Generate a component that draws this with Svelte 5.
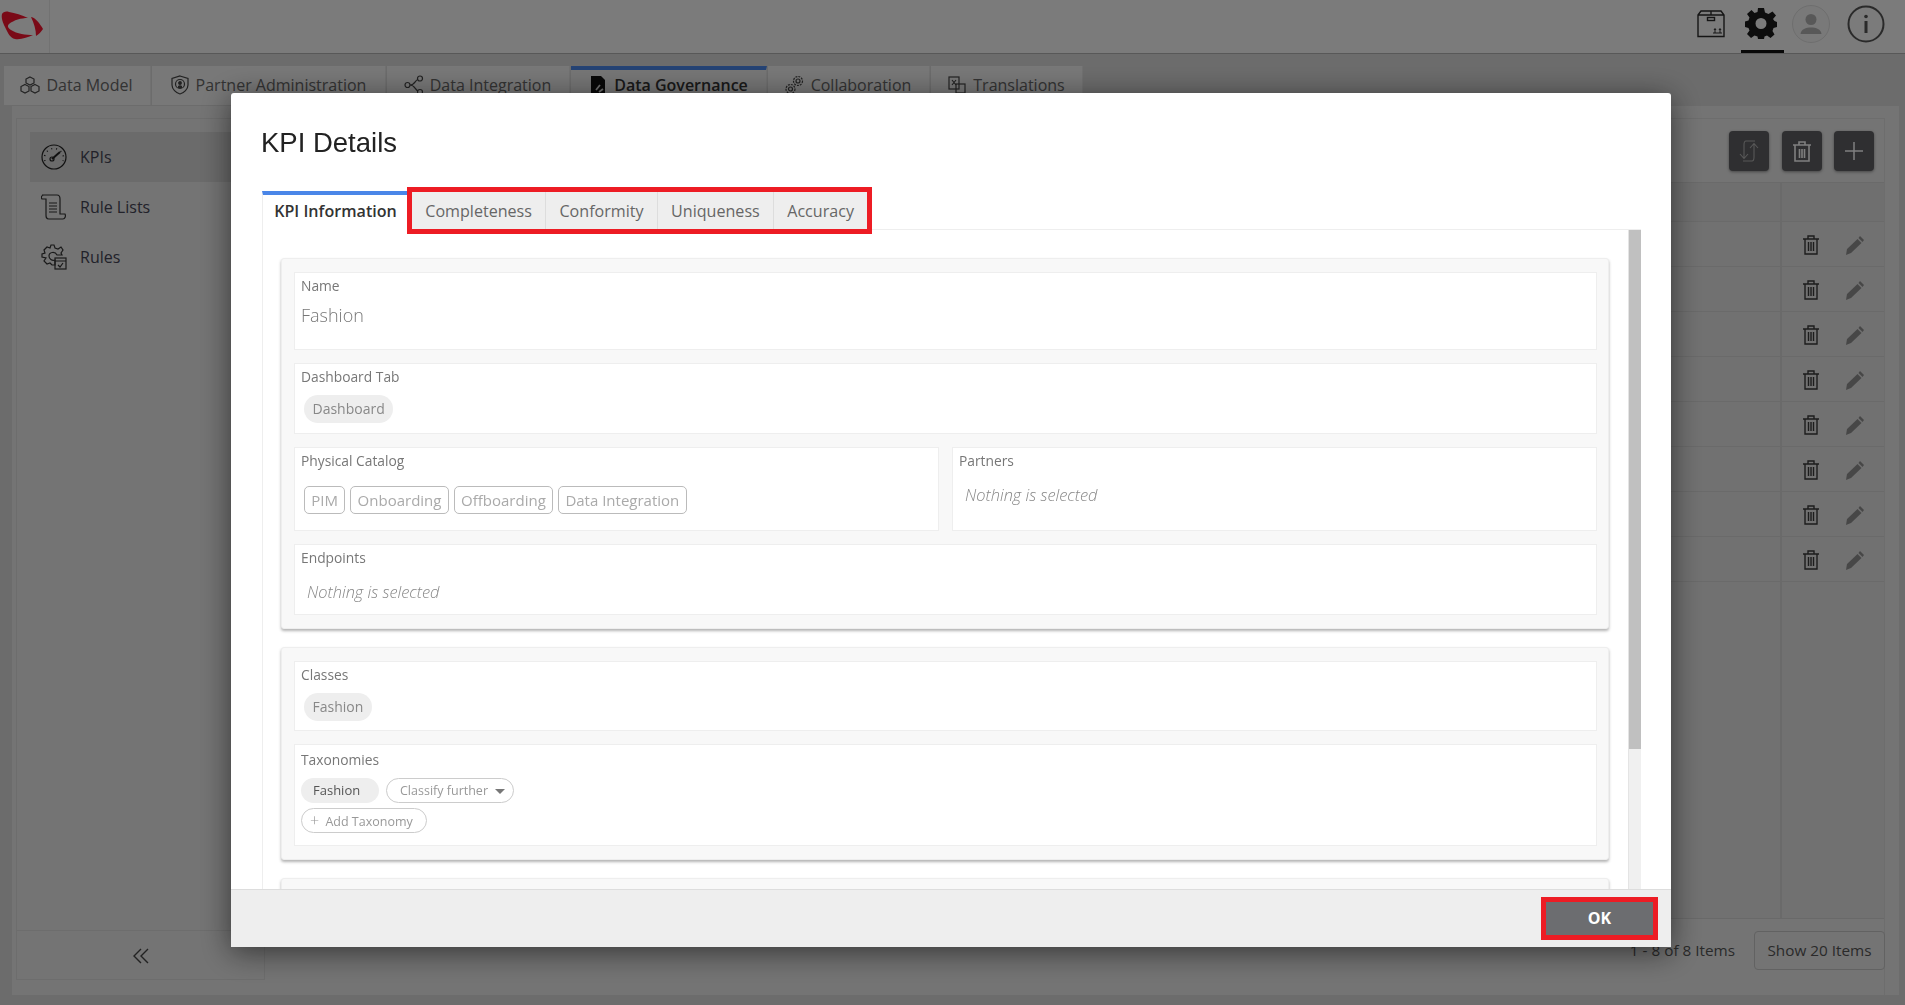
<script>
  const tabs = [
    { label: 'Data Model', w: 147, icon: 'cubes' },
    { label: 'Partner Administration', w: 234, icon: 'shield' },
    { label: 'Data Integration', w: 183, icon: 'nodes' },
    { label: 'Data Governance', w: 196, icon: 'doc', active: true },
    { label: 'Collaboration', w: 162, icon: 'gears' },
    { label: 'Translations', w: 152, icon: 'trans' }
  ];
  const rows = Array.from({ length: 8 });
  const detailTabs = ['Completeness', 'Conformity', 'Uniqueness', 'Accuracy'];
  const catalogs = ['PIM', 'Onboarding', 'Offboarding', 'Data Integration'];
</script>

<div class="page">
  <header class="topbar">
    <div class="logo">
      <svg width="44" height="32" viewBox="0 0 44 32">
        <g transform="translate(-1,-10)" fill="#f5142e">
          <path d="M2 14 C3 12 6 11 9 12 C15 13 22 15 28 18 C21 18 14 20 9 24 C7 26 8 28 11 30 C17 34 26 35 33 35 C28 37 21 40 15 39 C10 38 8 33 5 27 C3 23 1 18 2 14Z" />
          <path d="M31 17 C36 18 40 24 43 29 C41 32 39 34 36 36 C36 30 34 23 31 17Z" />
        </g>
      </svg>
    </div>
    <div class="spacer"></div>
    <div class="top-icons">
      <svg class="ti box" width="28" height="28" viewBox="0 0 28 28" fill="none" stroke="#2a2a2a" stroke-width="1.4">
        <path d="M1 5 L4 1 H24 L27 5 V26.500 H1Z M1 5 H27 M14 1 V5" />
        <rect x="10.500" y="7.500" width="7" height="3" />
        <path d="M16 23 H25 M18 23 V19 M23 23 V19 M17 20 L18 18.500 L19 20 M22 20 L23 18.500 L24 20" stroke-width="1" />
      </svg>
      <div class="gear-wrap">
        <svg width="32" height="32" viewBox="0 0 32 32">
          <path fill="#1a1a1a" fill-rule="evenodd" d="M13 1 H19 L20 5.500 L23.500 7 L27.500 4.500 L31 8.500 L28 12 L29.500 14 L32 15 V20 L28.500 21 L27.500 24 L29.500 27.500 L25.500 31 L22 28.500 L19.500 29.500 L19 32 H13 L12.500 29.500 L9.500 28.500 L6 31 L2 27 L4.500 23.500 L3.500 21 L0 20 V14.500 L3.500 13.500 L4.500 10.500 L2 7 L6.500 3 L9.500 6 L12.500 5 Z M16 11 A5.500 5.500 0 1 0 16 22 A5.500 5.500 0 1 0 16 11Z" />
        </svg>
      </div>
      <svg class="ti avatar" width="38" height="38" viewBox="0 0 38 38">
        <circle cx="19" cy="19" r="18.500" fill="#f2f2f2" stroke="#dcdcdc" />
        <circle cx="19" cy="14.500" r="5.500" fill="#b0b0b0" />
        <path fill="#b0b0b0" d="M8.500 29 C9 24 14 22.500 19 22.500 C24 22.500 29 24 29.500 29Z" />
      </svg>
      <svg class="ti info" width="38" height="38" viewBox="0 0 38 38">
        <circle cx="19" cy="19" r="17.500" fill="none" stroke="#555" stroke-width="2" />
        <circle cx="19" cy="11.500" r="1.800" fill="#555" />
        <rect x="17.500" y="16" width="3" height="12" fill="#555" />
      </svg>
    </div>
  </header>

  <nav class="maintabs">
    {#each tabs as t}
      <div class="maintab" class:active={t.active} style="width:{t.w}px">
        <svg width="20" height="20" viewBox="0 0 20 20" fill="none" stroke="#444" stroke-width="1.200">
          {#if t.icon === 'cubes'}
            <path d="M10 2 L14 4 V8 L10 10 L6 8 V4Z M5 9.500 L9 11.500 V16 L5 18 L1 16 V11.500Z M15 9.500 L19 11.500 V16 L15 18 L11 16 V11.500Z" />
          {:else if t.icon === 'shield'}
            <path d="M10 1 L18 3.500 V10 C18 14 14 18 10 19 C6 18 2 14 2 10 V3.500Z" />
            <circle cx="10" cy="9" r="4.500" />
            <circle cx="10" cy="8" r="1.300" fill="#444" />
            <path fill="#444" d="M8 13 H12 V11 C11 10 9 10 8 11Z" stroke="none" />
          {:else if t.icon === 'nodes'}
            <circle cx="3.500" cy="10" r="2.500" />
            <circle cx="16" cy="3.500" r="2.500" />
            <circle cx="16" cy="17" r="2.500" />
            <path d="M6 10 C11 10 11 5 14 4.500 M6 10 C11 10 11 15 14 16" />
          {:else if t.icon === 'doc'}
            <path fill="#111" stroke="none" d="M3 1 H13 L17 5 V19 H3Z" />
            <path stroke="#ddd" stroke-width="1.800" d="M8 15 L12 10 M11 17 L15 14" />
          {:else if t.icon === 'gears'}
            <circle cx="13" cy="6" r="4.500" stroke-dasharray="2 1" />
            <circle cx="13" cy="6" r="2" />
            <circle cx="5.500" cy="14" r="4.500" stroke-dasharray="2 1" />
            <circle cx="5.500" cy="14" r="2" />
          {:else}
            <rect x="2" y="2" width="10" height="12" />
            <rect x="9" y="9" width="9" height="9" />
            <path d="M5 5 L9 10 M9 5 L5 10" />
          {/if}
        </svg>
        <span>{t.label}</span>
      </div>
    {/each}
  </nav>

  <section class="panel">
    <aside class="side">
      <div class="side-list">
        <div class="side-item sel">
          <svg width="26" height="26" viewBox="0 0 26 26" fill="none" stroke="#222" stroke-width="1.200">
            <circle cx="13" cy="13" r="12" />
            <path stroke-dasharray="1 4" stroke-width="1.500" d="M4 17 A9.500 9.500 0 1 1 22 17" />
            <path stroke-width="2" d="M11 15 L19 8" />
            <circle cx="11" cy="15" r="2" />
          </svg>
          <span>KPIs</span>
        </div>
        <div class="side-item">
          <svg width="26" height="26" viewBox="0 0 26 26" fill="none" stroke="#333" stroke-width="1.200">
            <path d="M1 1 H16 C19 1 19 4 19 5 V20 H24 C25 22 24 25 22 25 H8 C5 25 5 23 5 21 V5 H1 C0 4 0 1 3 1" />
            <path d="M8 9 H16 M8 12 H16 M8 15 H16 M8 18 H16" />
          </svg>
          <span>Rule Lists</span>
        </div>
        <div class="side-item">
          <svg width="26" height="26" viewBox="0 0 26 26" fill="none" stroke="#333" stroke-width="1.200">
            <path d="M10 1 H13 L14 4 L17 5 L20 3 L22 6 L20 9 L21 11 H16 C14 7 8 8 8 12 C8 15 11 17 14 16 V21 H11 L9 19 L6 20 L3 17 L5 14 L1 13 V10 L4 9 L3 6 L6 3 L9 4Z" />
            <rect x="14" y="14" width="11" height="11" />
            <path d="M14 17 H25 M17 21 L19 23 L22 19" />
          </svg>
          <span>Rules</span>
        </div>
      </div>
      <div class="collapse">
        <svg width="16" height="16" viewBox="0 0 16 16" fill="none" stroke="#444" stroke-width="1.400">
          <path d="M8 1 L1 8 L8 15 M15 1 L8 8 L15 15" />
        </svg>
      </div>
    </aside>

    <div class="main">
      <div class="toolbar">
        <button class="dark">
          <svg width="20" height="22" viewBox="0 0 20 22" fill="none" stroke="#b0b0b0" stroke-width="1.100">
            <path d="M16 1 H7 C5 1 5 3 5 5 V18 M1 14 L5 18.500 L9 14 M4 21 H13 C15 21 15 19 15 17 V4 M11 8 L15 3.500 L19 8" />
          </svg>
        </button>
        <button class="dark">
          <svg width="20" height="23" viewBox="0 0 20 23" fill="none" stroke="#fff" stroke-width="1.600">
            <path d="M1 5 H19 M7 5 V2 H13 V5 M3 5 V21 H17 V5 M7.500 9 V18 M10 9 V18 M12.500 9 V18" />
          </svg>
        </button>
        <button class="dark">
          <svg width="20" height="20" viewBox="0 0 20 20" stroke="#fff" stroke-width="1.500"><path d="M10 1 V19 M1 10 H19" /></svg>
        </button>
      </div>
      <div class="table">
        <div class="thead"><div class="c1"></div><div class="c2"></div></div>
        {#each rows as r}
          <div class="trow">
            <div class="c1"></div>
            <div class="c2">
              <svg width="16" height="20" viewBox="0 0 16 20" fill="none" stroke="#3a3a3a" stroke-width="1.400">
                <path d="M0 4 H16 M5 4 V1 H11 V4 M2 4 V19 H14 V4 M5.500 7 V16 M8 7 V16 M10.500 7 V16" />
              </svg>
              <svg width="20" height="20" viewBox="0 0 20 20">
                <path fill="#8f8f8f" d="M15 1 L19 5 L17.500 7 L13.500 3Z M12.500 4 L16.500 8 L6 18 L1 20 L2 14Z" />
              </svg>
            </div>
          </div>
        {/each}
        <div class="tfill"><div class="c1"></div><div class="c2"></div></div>
      </div>
      <div class="pager">
        <span class="count">1 - 8 of 8 Items</span>
        <span class="show">Show 20 Items</span>
      </div>
    </div>
  </section>
</div>

<div class="overlay"></div>

<div class="modal">
  <h1>KPI Details</h1>
  <div class="dtabs">
    <div class="dtab active">KPI Information</div>
    <div class="dtab-group">
      {#each detailTabs as d}
        <div class="dtab">{d}</div>
      {/each}
    </div>
  </div>
  <div class="dbody">
    <div class="scroll">
      <div class="card">
        <div class="field name">
          <label>Name</label>
          <div class="value">Fashion</div>
        </div>
        <div class="field dash">
          <label>Dashboard Tab</label>
          <div class="chips"><span class="pill">Dashboard</span></div>
        </div>
        <div class="two">
          <div class="field cat">
            <label>Physical Catalog</label>
            <div class="chips outline">
              {#each catalogs as c}<span class="tag">{c}</span>{/each}
            </div>
          </div>
          <div class="field cat">
            <label>Partners</label>
            <div class="none partners">Nothing is selected</div>
          </div>
        </div>
        <div class="field end">
          <label>Endpoints</label>
          <div class="none">Nothing is selected</div>
        </div>
      </div>

      <div class="card">
        <div class="field classes">
          <label>Classes</label>
          <div class="chips"><span class="pill">Fashion</span></div>
        </div>
        <div class="field tax">
          <label>Taxonomies</label>
          <div class="tax-line first">
            <span class="tpill">Fashion</span>
            <span class="toutline further">Classify further <i class="caret"></i></span>
          </div>
          <div class="tax-line">
            <span class="toutline add"><b>+</b> Add Taxonomy</span>
          </div>
        </div>
      </div>

      <div class="card stub"></div>
    </div>
    <div class="scrollbar"><div class="thumb"></div></div>
  </div>
  <footer class="mfoot">
    <button class="ok">OK</button>
  </footer>
</div>

<style>
  :global(body) {
    margin: 0;
    font-family: "Open Sans", sans-serif;
    overflow: hidden;
  }
  .page {
    width: 1905px;
    height: 1005px;
    background: #d8d8d8;
    display: flex;
    flex-direction: column;
    overflow: hidden;
  }
  .topbar {
    height: 53px;
    flex: none;
    background: #f6f6f6;
    border-bottom: 1px solid #b0b0b0;
    display: flex;
    box-sizing: content-box;
  }
  .logo {
    width: 50px;
    border-right: 1px solid #e4e4e4;
    padding: 10px 0 0 1px;
    box-sizing: border-box;
    overflow: visible;
  }
  .logo svg { display: block; }
  .spacer { flex: 1; }
  .top-icons {
    display: flex;
    align-items: flex-start;
    padding-right: 20px;
  }
  .ti { display: block; }
  .box { margin-top: 10px; margin-right: 16px; }
  .gear-wrap {
    width: 43px;
    height: 53px;
    box-sizing: border-box;
    padding: 7px 0 0 4px;
    border-bottom: 3px solid #111;
    margin-right: 8px;
  }
  .gear-wrap svg { display: block; }
  .avatar { margin-top: 5px; margin-right: 17px; }
  .info { margin-top: 5px; }

  .maintabs {
    display: flex;
    height: 39px;
    margin-top: 12px;
    padding-left: 4px;
    gap: 1px;
    flex: none;
  }
  .maintab {
    background: #f0f0f0;
    box-sizing: border-box;
    display: flex;
    align-items: center;
    justify-content: center;
    gap: 6px;
    font-size: 16px;
    color: #666;
    padding: 0 1px 2px 0;
    border-right: 1px solid #e2e2e2;
  }
  .maintab svg { flex: none; }
  .maintab.active {
    background: #ececec;
    border-top: 4px solid #4a86e8;
    font-weight: 600;
    color: #333;
    padding-bottom: 6px;
  }
  .panel {
    flex: none;
    height: 889px;
    margin: 1px 6px 0 12px;
    background: #e8e8e8;
    display: flex;
    box-sizing: border-box;
    padding: 12px 14px 0 4px;
  }
  .side {
    width: 249px;
    height: 862px;
    box-sizing: border-box;
    border: 1px solid #dadada;
    display: flex;
    flex-direction: column;
    padding: 13px 0 0 13px;
  }
  .side-list { flex: 1; }
  .side-item {
    height: 50px;
    display: flex;
    align-items: center;
    gap: 13px;
    padding-left: 11px;
    font-size: 16px;
    color: #445;
  }
  .side-item.sel { background: #d6d6d6; }
  .collapse {
    height: 49px;
    margin-left: -13px;
    padding-top: 2px;
    box-sizing: border-box;
    border-top: 1px solid #dadada;
    display: flex;
    align-items: center;
    justify-content: center;
  }
  .main {
    flex: 1;
    display: flex;
    flex-direction: column;
    border: 1px solid #dadada;
    border-bottom: none;
    border-left: none;
    min-width: 0;
  }
  .toolbar {
    height: 64px;
    flex: none;
    display: flex;
    justify-content: flex-end;
    gap: 12.5px;
    padding: 12px 10px 0 0;
    box-sizing: border-box;
    border-bottom: 1px solid #d4d4d4;
  }
  .dark {
    width: 40px;
    height: 40px;
    border: none;
    background: #5e5e62;
    border-radius: 4px;
    display: flex;
    align-items: center;
    justify-content: center;
    padding: 0;
    box-shadow: 0 1px 3px rgba(0,0,0,.4);
  }
  .table {
    height: 736px;
    flex: none;
    display: flex;
    flex-direction: column;
    box-sizing: border-box;
    border-bottom: 1px solid #d2d2d2;
  }
  .thead { height: 39px; display: flex; flex: none; border-bottom: 1px solid #d4d4d4; box-sizing: border-box; background: #dedede; }
  .trow { height: 45px; display: flex; flex: none; border-bottom: 1px solid #d4d4d4; box-sizing: border-box; background: #e2e2e2; }
  .tfill { flex: 1; display: flex; background: #e2e2e2; }
  .c1 { flex: 1; border-right: 2px solid #d4d4d4; }
  .c2 {
    width: 102px;
    display: flex;
    align-items: center;
    gap: 26px;
    padding: 2px 0 0 21px;
    box-sizing: border-box;
  }
  .pager {
    display: flex;
    justify-content: flex-end;
    align-items: center;
    gap: 19px;
    height: 39px;
    margin: 12px -1px 0 0;
    font-size: 15.300px;
    color: #555;
    flex: none;
  }
  .count { margin-bottom: 2px; }
  .show {
    width: 131px;
    height: 39px;
    box-sizing: border-box;
    border: 1px solid #c4c4c4;
    border-radius: 4px;
    padding-bottom: 2px;
    display: flex;
    align-items: center;
    justify-content: center;
    white-space: nowrap;
  }

  .overlay {
    position: fixed;
    inset: 0;
    background: rgba(0,0,0,.5);
  }
  .modal {
    position: fixed;
    left: 231px;
    top: 93px;
    width: 1440px;
    height: 854px;
    background: #fff;
    border-radius: 3px 3px 0 0;
    box-shadow: 0 5px 30px rgba(0,0,0,.55);
    display: flex;
    flex-direction: column;
    overflow: hidden;
  }
  h1 {
    margin: 0;
    padding: 32px 0 0 30px;
    height: 98px;
    box-sizing: border-box;
    font-family: "Liberation Sans", Arial, sans-serif;
    font-size: 27.500px;
    line-height: 36px;
    font-weight: 400;
    color: #222;
    flex: none;
  }
  .dtabs {
    display: flex;
    height: 41px;
    flex: none;
    margin: 0 30px 0 31px;
    position: relative;
  }
  .dtab {
    font-size: 16.100px;
    display: flex;
    align-items: center;
    justify-content: center;
    box-sizing: border-box;
    color: #666;
    background: #eee;
    padding: 0 13.250px;
    height: 37px;
    border-right: 1px solid #ddd;
    white-space: nowrap;
  }
  .dtab:last-child { border-right: none; }
  .dtab.active {
    width: 145px;
    height: 42px;
    padding: 0 0 7px 1px;
    border-top: 4px solid #4a86e8;
    border-left: 1px solid #eee;
    border-right: none;
    background: #fff;
    color: #333;
    font-weight: 600;
    position: relative;
    z-index: 1;
  }
  .dtab-group {
    display: flex;
    border: 5px solid #ed1c24;
    height: 47px;
    margin-top: -4px;
    box-sizing: border-box;
    position: relative;
    z-index: 2;
  }
  .dbody {
    flex: 1;
    min-height: 0;
    margin: -3px 30px 0 31px;
    border: 1px solid #eee;
    border-bottom: none;
    border-right: none;
    display: flex;
    overflow: hidden;
  }
  .scroll {
    flex: 1;
    min-width: 0;
    padding: 28px 19px 0 18px;
    overflow: hidden;
  }
  .scrollbar {
    width: 13px;
    flex: none;
    background: #f0f0f0;
    border-left: 1px solid #e4e4e4;
    box-sizing: border-box;
  }
  .thumb { height: 519px; background: #c0c0c0; }
  .card {
    background: #f8f8f8;
    border: 1px solid #eee;
    border-radius: 3px;
    box-shadow: 0 2px 3px rgba(0,0,0,.3);
    padding: 13px 11px 13px 12px;
    margin-bottom: 18px;
    display: flex;
    flex-direction: column;
    gap: 13px;
    box-sizing: border-box;
  }
  .stub { height: 40px; }
  .field {
    background: #fff;
    border: 1px solid #eee;
    box-sizing: border-box;
    padding: 3px 6px 0;
  }
  .field label {
    display: block;
    font-size: 13.800px;
    line-height: 19px;
    color: #777;
  }
  .name { height: 78px; }
  .value {
    font-size: 18px;
    line-height: 24px;
    font-weight: 300;
    color: #777;
    margin-top: 8px;
  }
  .dash { height: 71px; }
  .classes { height: 70px; }
  .chips { display: flex; padding: 9px 0 0 3px; gap: 5px; }
  .pill {
    height: 28px;
    padding: 0 8.500px;
    border-radius: 14px;
    background: #eee;
    color: #888;
    font-size: 14px;
    line-height: 28px;
  }
  .two { display: flex; gap: 13px; }
  .two .field { flex: 1; min-width: 0; }
  .cat { height: 84px; }
  .outline { padding-top: 16px; }
  .tag {
    height: 28px;
    box-sizing: border-box;
    padding: 0 6.300px;
    border: 1px solid #bbb;
    border-radius: 5px;
    color: #aaa;
    font-size: 15px;
    line-height: 26px;
  }
  .none {
    font-size: 16.400px;
    font-style: italic;
    font-weight: 300;
    color: #888;
    line-height: 22px;
    padding: 13px 0 0 6px;
    margin-top: 1px;
  }
  .end { height: 71px; }
  .field.tax { height: 102px; padding-top: 5px; }
  .tax-line { display: flex; gap: 7px; margin-top: 5px; }
  .tax-line.first { margin-top: 9px; }
  .tpill {
    width: 78px;
    height: 25px;
    box-sizing: border-box;
    padding-left: 12px;
    border-radius: 13px;
    background: #eee;
    color: #555;
    font-size: 13px;
    line-height: 25px;
  }
  .toutline {
    height: 25px;
    box-sizing: border-box;
    border: 1px solid #ccc;
    border-radius: 13px;
    color: #999;
    font-size: 12.500px;
    line-height: 23px;
    white-space: nowrap;
  }
  .further { width: 128px; padding-left: 13px; }
  .caret {
    display: inline-block;
    width: 0;
    height: 0;
    border: 5px solid transparent;
    border-top: 5px solid #777;
    border-bottom: none;
    margin-left: 4px;
    vertical-align: 1px;
  }
  .add { width: 126px; padding-left: 8px; }
  .add b { font-weight: 300; font-size: 16px; margin-right: 3px; }
  .mfoot {
    height: 58px;
    flex: none;
    background: #eee;
    border-top: 1px solid #ddd;
    box-sizing: border-box;
    display: flex;
    justify-content: flex-end;
    align-items: flex-start;
    padding: 7px 13px 0 0;
    position: relative;
  }
  .ok {
    width: 117px;
    height: 43px;
    box-sizing: border-box;
    background: #6c6d70;
    border: 5px solid #ed1c24;
    color: #fff;
    font-family: "Open Sans", sans-serif;
    font-weight: 700;
    font-size: 16px;
    padding: 0 0 2px;
  }
</style>
